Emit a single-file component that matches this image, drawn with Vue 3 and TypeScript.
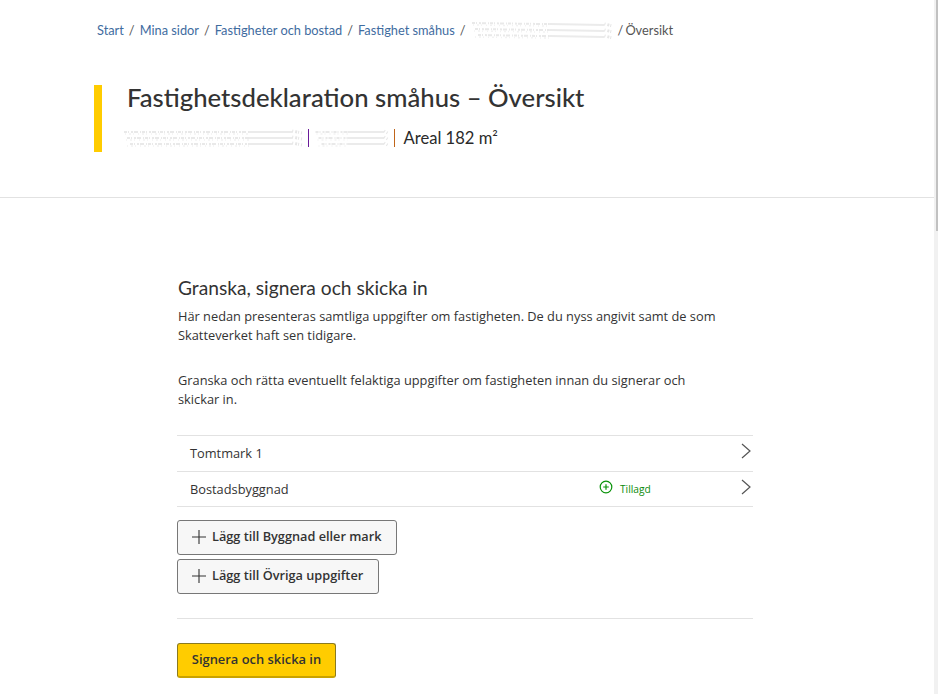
<script setup lang="ts">
interface Stroke { d: string; dash?: string; color: string; width: number }

const crumbs: string[] = ['Start', 'Mina sidor', 'Fastigheter och bostad', 'Fastighet småhus']

// The reference has its personal data wiped out: pale, noisy streaks.
function smudge(w: number, rows: number[], slope: number, noisy: number): Stroke[] {
  const out: Stroke[] = []
  rows.forEach((y, i) => {
    const split = w * noisy
    const end = w * 0.94
    const y1 = y + slope * (split / w)
    const y2 = y + slope * (end / w)
    out.push({ d: `M${1 + i * 3} ${y}L${split} ${y1}`, dash: '3 1 1 2 2 1 4 2 1 1', color: '#e9e9e9', width: 2 })
    out.push({ d: `M${2 + i} ${y + 2}L${split} ${y1 + 2}`, dash: '1 3 2 2 1 4', color: '#f2f2f2', width: 1.5 })
    out.push({ d: `M${split} ${y1}L${end} ${y2}`, color: '#ebebeb', width: 2 })
    out.push({ d: `M${end} ${y2 - 1}L${w - 1} ${y2 + 1}`, dash: '1 2 2 1', color: '#e6e6e6', width: 3 })
  })
  return out
}

const crumbSmudge = smudge(142, [4, 10, 16], 2, 0.55)
const subSmudgeA = smudge(180, [4, 10, 16], 0, 0.7)
const subSmudgeB = smudge(74, [4, 10, 16], 0, 0.45)
</script>

<template>
  <div class="page">
    <nav class="crumbs">
      <template v-for="c in crumbs" :key="c">
        <a class="link">{{ c }}</a><span class="sep">/</span>
      </template>
      <svg class="smudge" width="142" height="22" viewBox="0 0 142 22">
        <path v-for="(s, i) in crumbSmudge" :key="i" :d="s.d" :stroke="s.color" :stroke-width="s.width" :stroke-dasharray="s.dash" fill="none" />
      </svg>
      <span class="sep sep-last">/</span>
      <span class="current">Översikt</span>
    </nav>

    <header class="head">
      <div class="head-inner">
        <h1>Fastighetsdeklaration småhus – Översikt</h1>
        <p class="sub">
          <svg class="smudge smudge-a" width="180" height="20" viewBox="0 0 180 20">
            <path v-for="(s, i) in subSmudgeA" :key="i" :d="s.d" :stroke="s.color" :stroke-width="s.width" :stroke-dasharray="s.dash" fill="none" />
          </svg>
          <span class="bar bar-purple"></span>
          <svg class="smudge smudge-b" width="75" height="20" viewBox="0 0 74 20">
            <path v-for="(s, i) in subSmudgeB" :key="i" :d="s.d" :stroke="s.color" :stroke-width="s.width" :stroke-dasharray="s.dash" fill="none" />
          </svg>
          <span class="bar bar-orange"></span>
          <span>Areal 182 m²</span>
        </p>
      </div>
    </header>

    <main class="content">
      <h2>Granska, signera och skicka in</h2>
      <p class="intro">Här nedan presenteras samtliga uppgifter om fastigheten. De du nyss angivit samt de som Skatteverket haft sen tidigare.</p>
      <p class="intro second">Granska och rätta eventuellt felaktiga uppgifter om fastigheten innan du signerar och skickar in.</p>

      <ul class="list">
        <li class="row">
          <span>Tomtmark 1</span>
          <svg class="chev" width="12" height="16" viewBox="0 0 12 16"><path d="M2 1l8 7-8 7" fill="none" stroke="#555" stroke-width="1.2"/></svg>
        </li>
        <li class="row short">
          <span>Bostadsbyggnad</span>
          <span class="added">
            <svg width="14" height="14" viewBox="0 0 14 14"><circle cx="7" cy="7" r="5.8" fill="none" stroke="#0a930a" stroke-width="1.2"/><path d="M7 4.2v5.6M4.2 7h5.6" stroke="#0a930a" stroke-width="1.2"/></svg>
            <span class="added-text">Tillagd</span>
          </span>
          <svg class="chev" width="12" height="16" viewBox="0 0 12 16"><path d="M2 1l8 7-8 7" fill="none" stroke="#555" stroke-width="1.2"/></svg>
        </li>
      </ul>

      <div class="actions">
        <button class="btn" type="button">
          <svg width="14" height="14" viewBox="0 0 14 14"><path d="M7 0v14M0 7h14" stroke="#333" stroke-width="1.1"/></svg>
          Lägg till Byggnad eller mark
        </button>
        <button class="btn" type="button">
          <svg width="14" height="14" viewBox="0 0 14 14"><path d="M7 0v14M0 7h14" stroke="#333" stroke-width="1.1"/></svg>
          Lägg till Övriga uppgifter
        </button>
      </div>

      <hr class="rule" />

      <button class="submit" type="button">Signera och skicka in</button>
    </main>

    <div class="track"><div class="thumb"></div></div>
  </div>
</template>

<style>
html, body { margin: 0; background: #fff; overflow: hidden; }
</style>

<style scoped>
.page { height: 694px; overflow: hidden; position: relative; background: #fff; color: #333; font-family: Lato, sans-serif; }
.crumbs { display: flex; align-items: center; height: 20px; padding: 20px 0 0 97px; font-size: 12.8px; color: #4a4a4a; }
.link { color: #3f6c9f; }
.current { color: #555; }
.sep { margin: 0 5px; color: #555; }
.sep-last { margin-right: 2px; }
.smudge { display: block; flex: none; filter: blur(0.4px); }
.head { margin-top: 45px; height: 112px; border-bottom: 1px solid #e2e2e2; margin-right: 4px; }
.head-inner { margin-left: 94px; border-left: 8px solid #fc0; padding-left: 25px; height: 67px; }
h1 { margin: 0; font-size: 25.7px; font-weight: 500; line-height: 24px; color: #333; }
.sub { display: flex; align-items: center; margin: 15px 0 0; font-size: 16.6px; color: #2a2a2a; height: 28px; }
.smudge-a { margin-left: -4px; }
.smudge-b { margin-left: 5px; }
.bar { width: 1px; height: 18px; margin-left: 5px; flex: none; }
.bar-purple { background: #6a1b9a; }
.bar-orange { background: #c0651a; margin-right: 8.5px; }
.content { width: 576px; margin: 79px 0 0 177px; font-family: "Open Sans", sans-serif; font-size: 12.8px; }
h2 { margin: 0; padding-left: 1px; font-family: Lato, sans-serif; font-size: 19.2px; font-weight: 400; line-height: 22px; color: #333; }
.intro { margin: 8px 0 0 1px; width: 550px; line-height: 19px; color: #333; }
.second { margin-top: 26px; width: 520px; }
.list { list-style: none; margin: 26px 0 0; padding: 0; border-top: 1px solid #e2e2e2; }
.row { display: flex; align-items: center; padding: 0 1px 2px 13px; height: 33px; border-bottom: 1px solid #e2e2e2; color: #333; }
.short { padding-bottom: 1px; }
.row > span:first-child { flex: 1; }
.chev { margin-top: -3px; }
.added { display: flex; align-items: center; gap: 7px; width: 141px; margin-top: -3px; }
.added-text { font-size: 10.2px; color: #0a8a0a; margin-top: 4px; }
.actions { display: flex; flex-direction: column; align-items: flex-start; gap: 4px; margin-top: 13px; }
.btn { display: inline-flex; align-items: center; gap: 6px; height: 35px; padding: 0 15px 3px 14px; box-sizing: border-box; background: #f7f7f7; border: 1px solid #777; border-radius: 3px; color: #333; font: 600 12.72px "Open Sans", sans-serif; }
.btn svg { margin-top: 1px; }
.rule { border: 0; border-top: 1px solid #e2e2e2; margin: 24px 0; }
.submit { display: block; height: 35px; width: 159px; padding: 0 0 2px; box-sizing: border-box; background: #fc0; border: 1px solid #8a7a20; border-bottom: 2px solid #c9a200; border-radius: 3px; color: #333; font: 600 12.9px "Open Sans", sans-serif; }
.track { position: absolute; top: 0; right: 0; width: 4px; height: 694px; background: #f1f1f1; }
.thumb { position: absolute; top: 0; right: 0; width: 2px; height: 231px; background: #c1c1c1; }
</style>
